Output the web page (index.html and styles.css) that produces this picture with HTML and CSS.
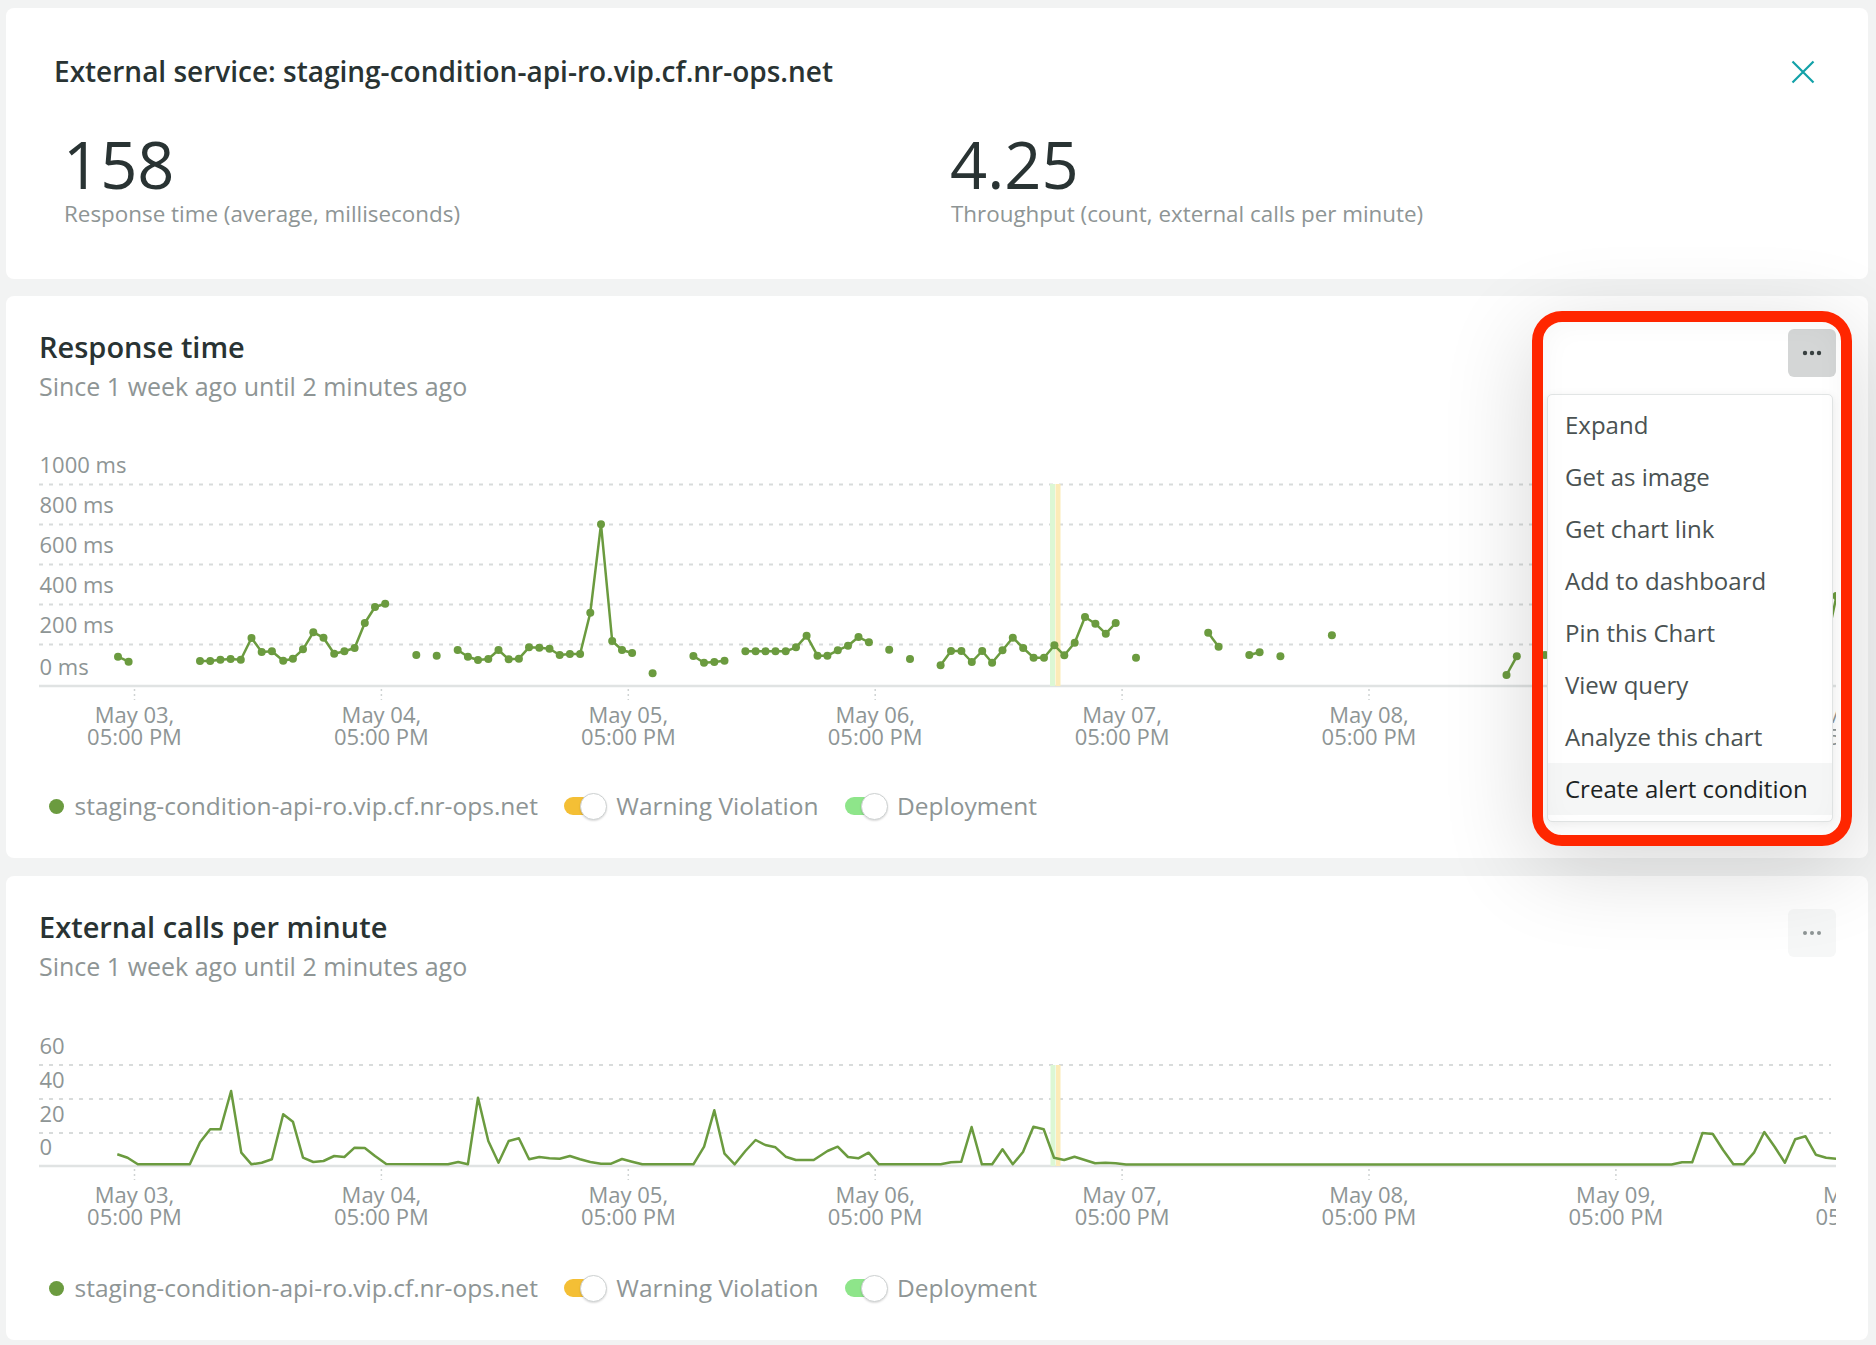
FILE: index.html
```html
<!DOCTYPE html>
<html lang="en">
<head>
<meta charset="utf-8">
<title>External service</title>
<link rel="stylesheet" href="styles.css">
</head>
<body>
<main class="page">
  <section class="card summary">
    <div class="summary-head">
      <h1 class="summary-title">External service: staging-condition-api-ro.vip.cf.nr-ops.net</h1>
      <button class="close" aria-label="Close">
        <svg width="24" height="24" viewBox="0 0 24 24"><path d="M1.5 1.5L22.5 22.5M22.5 1.5L1.5 22.5" stroke="#12a1a8" stroke-width="2.2" fill="none"/></svg>
      </button>
    </div>
    <div class="metrics">
      <div class="metric">
        <div class="metric-value">158</div>
        <div class="metric-label">Response time (average, milliseconds)</div>
      </div>
      <div class="metric">
        <div class="metric-value">4.25</div>
        <div class="metric-label">Throughput (count, external calls per minute)</div>
      </div>
    </div>
  </section>

  <section class="card chart-card">
    <header class="chart-head">
      <div class="chart-titles">
        <h2 class="chart-title">Response time</h2>
        <p class="chart-sub">Since 1 week ago until 2 minutes ago</p>
      </div>
      <div class="actions">
        <button class="more active" aria-label="More">
          <svg width="20" height="6" viewBox="0 0 20 6"><circle cx="3" cy="3" r="2.2"/><circle cx="10" cy="3" r="2.2"/><circle cx="17" cy="3" r="2.2"/></svg>
        </button>
        <ul class="menu">
          <li>Expand</li>
          <li>Get as image</li>
          <li>Get chart link</li>
          <li>Add to dashboard</li>
          <li>Pin this Chart</li>
          <li>View query</li>
          <li>Analyze this chart</li>
          <li class="hover">Create alert condition</li>
        </ul>
        <div class="annotation"></div>
      </div>
    </header>
    <svg class="chart chart-rt" width="1797" height="300" viewBox="39 450 1797 300">
      <defs>
        <marker id="dot" viewBox="-5 -5 10 10" markerWidth="10" markerHeight="10" refX="0" refY="0" markerUnits="userSpaceOnUse">
          <circle r="4" fill="#6b9b3f"/>
        </marker>
      </defs>
      <g class="grid">
        <line x1="39" x2="1831" y1="484.5" y2="484.5"/>
        <line x1="39" x2="1831" y1="524.5" y2="524.5"/>
        <line x1="39" x2="1831" y1="564.5" y2="564.5"/>
        <line x1="39" x2="1831" y1="604.5" y2="604.5"/>
        <line x1="39" x2="1831" y1="644.5" y2="644.5"/>
      </g>
      <line class="axis" x1="39" x2="1836" y1="686" y2="686"/>
      <g class="ylabels">
        <text x="39.5" y="473">1000 ms</text>
        <text x="39.5" y="513">800 ms</text>
        <text x="39.5" y="553">600 ms</text>
        <text x="39.5" y="593">400 ms</text>
        <text x="39.5" y="633">200 ms</text>
        <text x="39.5" y="674.5">0 ms</text>
      </g>
      <g class="ticks">
        <line x1="134.5" x2="134.5" y1="689" y2="700"/>
        <line x1="381.4" x2="381.4" y1="689" y2="700"/>
        <line x1="628.3" x2="628.3" y1="689" y2="700"/>
        <line x1="875.2" x2="875.2" y1="689" y2="700"/>
        <line x1="1122.1" x2="1122.1" y1="689" y2="700"/>
        <line x1="1369" x2="1369" y1="689" y2="700"/>
        <line x1="1615.9" x2="1615.9" y1="689" y2="700"/>
      </g>
      <g class="xlabels">
        <text x="134.5" y="723">May 03,</text><text x="134.5" y="745">05:00 PM</text>
        <text x="381.4" y="723">May 04,</text><text x="381.4" y="745">05:00 PM</text>
        <text x="628.3" y="723">May 05,</text><text x="628.3" y="745">05:00 PM</text>
        <text x="875.2" y="723">May 06,</text><text x="875.2" y="745">05:00 PM</text>
        <text x="1122.1" y="723">May 07,</text><text x="1122.1" y="745">05:00 PM</text>
        <text x="1369" y="723">May 08,</text><text x="1369" y="745">05:00 PM</text>
        <text x="1615.9" y="723">May 09,</text><text x="1615.9" y="745">05:00 PM</text>
        <text x="1862.8" y="723">May 10,</text><text x="1862.8" y="745">05:00 PM</text>
      </g>
      <rect class="mark-deploy" x="1050" y="484" width="5" height="202"/>
      <rect class="mark-warn" x="1055.5" y="484" width="5" height="202"/>
      <g class="series">
        <polyline points="118,656.7 128.6,661.7"/>
        <polyline points="200,661 210.2,661 220.4,659.7 230.6,659 240.8,659.7 251.5,638 261.7,652 271.9,651.3 283.2,660.7 292.9,658.7 303,649.3 313.3,632.3 323.5,637.7 334.2,653.7 344.4,651.3 354.6,648 364.8,623 375,607 385.2,603.7"/>
        <polyline points="457.7,650 467.9,656.7 478,660 488.3,659 498.5,650 508.7,659.3 518.9,658.7 529,647.3 539.3,647.7 549.5,648.7 559.7,655 569.9,654 580.1,654 590.3,612.7 601,524.3 612.2,641 622,650 632.1,653"/>
        <polyline points="693.4,656 704,662.7 714.3,662 724.5,660.7"/>
        <polyline points="745.4,651.3 755.6,651.3 765.5,651.3 775.5,651.3 785.7,651.3 796,647.3 806.6,635.7 817.5,655.7 827.4,655.7 837.8,650.3 848,645.7 858.5,637 868.9,642.3"/>
        <polyline points="940.6,665.3 951,651 961.4,651 971.8,662 982.2,651 992.1,662.7 1002.5,650.3 1012.8,637.7 1023.2,648 1033.6,657.7 1044,657.7 1054.4,645.3 1064.3,655.3 1074.7,642.7 1085,617 1095.4,623.7 1105.8,633.7 1115.7,623"/>
        <polyline points="1208.2,632.7 1218.6,646.7"/>
        <polyline points="1249.3,655 1259.6,652.3"/>
        <polyline points="1506.5,675 1516.8,656.3"/>
        <polyline points="1815.5,660 1826,645 1836.5,596"/>
      </g>
      <g class="points">
        <circle cx="416.3" cy="655" r="4"/>
        <circle cx="436.7" cy="655.7" r="4"/>
        <circle cx="652.6" cy="673.3" r="4"/>
        <circle cx="889.2" cy="649.7" r="4"/>
        <circle cx="910" cy="659" r="4"/>
        <circle cx="1136" cy="657.7" r="4"/>
        <circle cx="1280.4" cy="656.3" r="4"/>
        <circle cx="1331.9" cy="635.3" r="4"/>
        <circle cx="1545" cy="655" r="4"/>
      </g>
    </svg>
    <div class="legend">
      <span class="legend-dot"></span>
      <span class="legend-text">staging-condition-api-ro.vip.cf.nr-ops.net</span>
      <span class="toggle"><span class="track track-warn"></span><span class="knob"></span></span>
      <span class="legend-text">Warning Violation</span>
      <span class="toggle"><span class="track track-deploy"></span><span class="knob"></span></span>
      <span class="legend-text">Deployment</span>
    </div>
  </section>

  <section class="card chart-card chart-card-last">
    <header class="chart-head">
      <div class="chart-titles">
        <h2 class="chart-title">External calls per minute</h2>
        <p class="chart-sub">Since 1 week ago until 2 minutes ago</p>
      </div>
      <div class="actions">
        <button class="more" aria-label="More">
          <svg width="20" height="6" viewBox="0 0 20 6"><circle cx="3" cy="3" r="2"/><circle cx="10" cy="3" r="2"/><circle cx="17" cy="3" r="2"/></svg>
        </button>
      </div>
    </header>
    <svg class="chart chart-cpm" width="1797" height="202" viewBox="39 1030 1797 202">
      <g class="grid">
        <line x1="39" x2="1831" y1="1065" y2="1065"/>
        <line x1="39" x2="1831" y1="1099" y2="1099"/>
        <line x1="39" x2="1831" y1="1133" y2="1133"/>
      </g>
      <line class="axis" x1="39" x2="1836" y1="1166" y2="1166"/>
      <g class="ylabels">
        <text x="39.5" y="1053.5">60</text>
        <text x="39.5" y="1087.5">40</text>
        <text x="39.5" y="1121.5">20</text>
        <text x="39.5" y="1154.5">0</text>
      </g>
      <g class="ticks">
        <line x1="134.5" x2="134.5" y1="1169" y2="1180"/>
        <line x1="381.4" x2="381.4" y1="1169" y2="1180"/>
        <line x1="628.3" x2="628.3" y1="1169" y2="1180"/>
        <line x1="875.2" x2="875.2" y1="1169" y2="1180"/>
        <line x1="1122.1" x2="1122.1" y1="1169" y2="1180"/>
        <line x1="1369" x2="1369" y1="1169" y2="1180"/>
        <line x1="1615.9" x2="1615.9" y1="1169" y2="1180"/>
      </g>
      <g class="xlabels">
        <text x="134.5" y="1203">May 03,</text><text x="134.5" y="1225">05:00 PM</text>
        <text x="381.4" y="1203">May 04,</text><text x="381.4" y="1225">05:00 PM</text>
        <text x="628.3" y="1203">May 05,</text><text x="628.3" y="1225">05:00 PM</text>
        <text x="875.2" y="1203">May 06,</text><text x="875.2" y="1225">05:00 PM</text>
        <text x="1122.1" y="1203">May 07,</text><text x="1122.1" y="1225">05:00 PM</text>
        <text x="1369" y="1203">May 08,</text><text x="1369" y="1225">05:00 PM</text>
        <text x="1615.9" y="1203">May 09,</text><text x="1615.9" y="1225">05:00 PM</text>
        <text x="1862.8" y="1203">May 10,</text><text x="1862.8" y="1225">05:00 PM</text>
      </g>
      <rect class="mark-deploy" x="1050.5" y="1065" width="5" height="101"/>
      <rect class="mark-warn" x="1056" y="1065" width="4.5" height="101"/>
      <polyline class="line" points="117.3,1154.3 127.6,1157.7 137.8,1164.3 189.8,1164.3 200,1142.3 210.2,1129.3 220.4,1129.3 231.1,1091 241.3,1152.7 251.5,1164.3 261.7,1162.7 271.9,1159.3 283.2,1114.3 292.9,1121.7 303,1157.7 313.3,1162 323.5,1161 334.2,1156 344.4,1157 354.6,1147.7 364.8,1148 375,1156 386.2,1164 448,1164.3 458.2,1162 467.9,1164.3 478,1097.7 488.3,1141 498.5,1162.7 508.7,1141 518.9,1138.3 529.1,1159.3 539.3,1157 549.5,1158.3 559.7,1158.7 569.9,1156 580.1,1159.3 590.3,1162 601,1163.7 611.2,1163.7 622,1159 632.1,1161.7 642.3,1164.3 693.4,1164.3 704.1,1146.7 714.3,1110.3 724.5,1153.7 734.7,1164.3 745.4,1151 755.6,1140 765.3,1145 775.5,1147.3 785.7,1156.7 795.9,1160 813.7,1160 827.5,1151 837.7,1146.7 848,1157 858.3,1158.3 868.6,1152.7 878.9,1164.3 940.7,1164.3 951,1162.3 961.3,1161.7 971.6,1127 981.9,1164.3 992.2,1164.3 1002.5,1149.3 1012.8,1164.3 1023,1152 1033.4,1126.7 1043.7,1129.3 1054,1157.7 1064.2,1160 1074.5,1156.7 1084.8,1160 1095.1,1163.3 1105.4,1162.7 1115.7,1163.3 1126,1164.5 1671.6,1164.5 1682,1162.3 1692.2,1162.3 1702.5,1133 1712.8,1134 1723.1,1150 1733.4,1164.3 1743.7,1164.3 1754,1152.7 1764.3,1132 1774.6,1146.7 1784.9,1162.7 1795.2,1139.3 1805.5,1136.3 1815.8,1154.7 1826.1,1157.7 1836.4,1158.7"/>
    </svg>
    <div class="legend">
      <span class="legend-dot"></span>
      <span class="legend-text">staging-condition-api-ro.vip.cf.nr-ops.net</span>
      <span class="toggle"><span class="track track-warn"></span><span class="knob"></span></span>
      <span class="legend-text">Warning Violation</span>
      <span class="toggle"><span class="track track-deploy"></span><span class="knob"></span></span>
      <span class="legend-text">Deployment</span>
    </div>
  </section>
</main>
</body>
</html>
```
FILE: styles.css
```css
* {
  box-sizing: border-box;
  margin: 0;
  padding: 0;
}

html,
body {
  background: #f2f3f3;
}

body {
  font-family: "Open Sans", "Liberation Sans", sans-serif;
  color: #293333;
}

.page {
  display: flex;
  flex-direction: column;
  gap: 17px;
  padding: 8px 8px 5px 6px;
}

.card {
  background: #ffffff;
  border-radius: 8px;
}

/* Summary card */
.summary {
  padding: 44px 0 50px 48px;
}

.summary-head {
  display: flex;
  align-items: flex-start;
  justify-content: space-between;
}

.summary-title {
  font-size: 28px;
  font-weight: 600;
  line-height: 38px;
  color: #293333;
}

.close {
  display: flex;
  width: 24px;
  height: 24px;
  margin-top: 8px;
  margin-right: 53px;
  background: none;
  border: 0;
}

.metrics {
  display: grid;
  grid-template-columns: 887px 887px;
  margin-top: 39px;
  margin-left: 9px;
}

.metric-value {
  font-size: 65px;
  font-weight: 400;
  line-height: 70px;
  color: #293333;
}

.metric-label {
  margin-left: 1px;
  font-size: 22.4px;
  line-height: 30px;
  color: #8e9595;
}

/* Chart cards */
.chart-card {
  padding: 30px 32px 36px 33px;
}

.chart-card-last {
  margin-top: 1px;
}

.chart-head {
  display: flex;
  justify-content: space-between;
  align-items: flex-start;
}

.chart-title {
  padding-top: 2px;
  font-size: 29px;
  font-weight: 600;
  line-height: 38px;
  color: #293333;
}

.chart-sub {
  margin-top: 4px;
  font-size: 25px;
  line-height: 32px;
  color: #8e9595;
}

.actions {
  position: relative;
  margin-top: 3px;
}

.more {
  display: flex;
  align-items: center;
  justify-content: center;
  width: 48px;
  height: 48px;
  border: 0;
  border-radius: 6px;
  background: #f6f7f7;
  fill: #8e9595;
}

.more.active {
  background: #d4d6d6;
  fill: #384040;
}

.menu {
  position: absolute;
  top: 65px;
  right: 3px;
  z-index: 5;
  width: 286px;
  padding: 4px 0 6px;
  list-style: none;
  background: #ffffff;
  border: 1px solid #e2e5e5;
  border-radius: 5px;
  box-shadow: 0 2px 10px rgba(0, 0, 0, 0.08);
}

.menu li {
  height: 52px;
  padding-left: 17px;
  font-size: 24px;
  line-height: 52px;
  color: #4a5252;
  white-space: nowrap;
}

.menu li.hover {
  background: #f5f6f6;
  color: #1c2323;
}

.annotation {
  position: absolute;
  top: -18px;
  right: -16px;
  z-index: 6;
  width: 320px;
  height: 535px;
  border: 11px solid #ff2600;
  border-radius: 30px;
  box-shadow: 0 20px 90px rgba(0, 0, 0, 0.16), inset 0 0 30px rgba(0, 0, 0, 0.04);
  pointer-events: none;
}

.chart {
  display: block;
  margin-top: 48px;
  overflow: hidden;
}

.grid line {
  stroke: #d8dbdb;
  stroke-width: 1.8;
  stroke-dasharray: 4 6;
}

.axis {
  stroke: #e0e3e3;
  stroke-width: 2.5;
}

.ticks line {
  stroke: #cfd3d3;
  stroke-width: 1.5;
  stroke-dasharray: 2 3;
}

.ylabels text,
.xlabels text {
  font-family: "Open Sans", "Liberation Sans", sans-serif;
  font-size: 22px;
  fill: #8e9595;
}

.xlabels text {
  text-anchor: middle;
}

.mark-deploy {
  fill: #dcf7d4;
}

.mark-warn {
  fill: #fcebb8;
}

.series polyline {
  fill: none;
  stroke: #6b9b3f;
  stroke-width: 2.5;
  stroke-linejoin: round;
  marker-start: url(#dot);
  marker-mid: url(#dot);
  marker-end: url(#dot);
}

.points circle {
  fill: #6b9b3f;
}

.line {
  fill: none;
  stroke: #6b9b3f;
  stroke-width: 2.5;
  stroke-linejoin: round;
}

/* Legend */
.legend {
  display: flex;
  align-items: center;
  height: 32px;
  margin-top: 40px;
  padding-left: 10px;
  font-size: 24.5px;
  color: #8e9595;
}

.legend-dot {
  width: 15px;
  height: 15px;
  margin-right: 10.5px;
  border-radius: 50%;
  background: #6b9b3f;
}

.legend-text {
  line-height: 32px;
  white-space: nowrap;
}

.toggle {
  position: relative;
  width: 43px;
  height: 27px;
  margin: 0 9px 0 26.5px;
}

.track {
  position: absolute;
  left: 0;
  top: 4.5px;
  width: 38px;
  height: 18px;
  border-radius: 9px;
}

.track-warn {
  background: #f4bf35;
}

.track-deploy {
  background: #8ee58a;
}

.knob {
  position: absolute;
  right: 0;
  top: 0;
  width: 27px;
  height: 27px;
  border-radius: 50%;
  background: #ffffff;
  border: 1.5px solid #cdd1d1;
  box-shadow: 0 1px 2px rgba(0, 0, 0, 0.15);
}
```
